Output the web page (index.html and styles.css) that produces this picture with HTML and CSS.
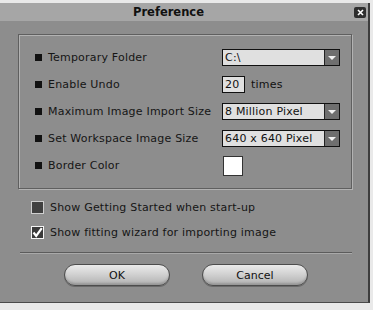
FILE: index.html
```html
<!DOCTYPE html>
<html lang="en">
<head>
    <meta charset="UTF-8">
    <title>Preference</title>
    <link rel="stylesheet" href="styles.css">
</head>
<body>
    <div class="window">
        <div class="titlebar">
            <span class="title">Preference</span>
            <span class="close">
                <svg width="7" height="7" viewBox="0 0 7 7"><path d="M1 1 L6 6 M6 1 L1 6" stroke="#fff" stroke-width="1.6"/></svg>
            </span>
        </div>

        <div class="group">
            <div class="row">
                <span class="bullet"></span><span class="label">Temporary Folder</span>
                <div class="select"><span class="value">C:\</span><span class="arrow"></span></div>
            </div>
            <div class="row">
                <span class="bullet"></span><span class="label">Enable Undo</span>
                <div class="undo"><span class="num">20</span><span class="unit">times</span></div>
            </div>
            <div class="row">
                <span class="bullet"></span><span class="label">Maximum Image Import Size</span>
                <div class="select"><span class="value">8 Million Pixel</span><span class="arrow"></span></div>
            </div>
            <div class="row">
                <span class="bullet"></span><span class="label">Set Workspace Image Size</span>
                <div class="select"><span class="value">640 x 640 Pixel</span><span class="arrow"></span></div>
            </div>
            <div class="row">
                <span class="bullet"></span><span class="label">Border Color</span>
                <div class="swatch"></div>
            </div>
        </div>

        <div class="options">
            <div class="check-row">
                <span class="box"></span>
                <span>Show Getting Started when start-up</span>
            </div>
            <div class="check-row">
                <span class="box checked">
                    <svg width="11" height="11" viewBox="0 0 11 11"><path d="M1.5 5.5 L4.2 9 L9.8 1.2" fill="none" stroke="#fff" stroke-width="2.2"/></svg>
                </span>
                <span>Show fitting wizard for importing image</span>
            </div>
        </div>

        <div class="separator"></div>

        <div class="buttons">
            <button class="btn">OK</button>
            <button class="btn">Cancel</button>
        </div>
    </div>
</body>
</html>
```

FILE: styles.css
```css
* { margin: 0; padding: 0; box-sizing: border-box; }
body {
    font-family: 'DejaVu Sans', Verdana, sans-serif;
    font-size: 11px;
    letter-spacing: 0.2px;
    color: #111;
    background: #e9e9e9;
}
.window {
    margin-top: 3px;
    width: 370px;
    height: 300px;
    background: #8d8d8d;
    border-right: 2px solid #3c3c3c;
    border-bottom: 1px solid #4a4a4a;
}
.titlebar {
    height: 18px;
    background: #a6a6a6;
    display: flex;
    align-items: center;
    position: relative;
}
.title {
    margin-left: 133px;
    font-size: 11.5px;
    font-weight: bold;
    letter-spacing: 0;
    color: #111;
}
.close {
    position: absolute;
    right: 2px;
    top: 4px;
    width: 12px;
    height: 11px;
    background: #2e2e2e;
    border-radius: 2px;
    display: flex;
    align-items: center;
    justify-content: center;
}
.group {
    margin: 13px 16px 0 18px;
    width: 334px;
    padding: 9px 0 9px 16px;
    border: 1px solid #5f5f5f;
    box-shadow: inset 1px 1px 0 #b2b2b2, 1px 1px 0 #b2b2b2;
}
.row {
    height: 27px;
    display: grid;
    grid-template-columns: 6px 167px auto;
    column-gap: 7px;
    align-items: center;
}
.row .label { color: #151515; }
.bullet {
    width: 7px;
    height: 7px;
    background: #111;
}
.select {
    width: 118px;
    height: 17px;
    border: 1px solid #111;
    background: #e0e0e0;
    display: flex;
}
.select .value {
    flex: 1;
    padding-left: 2px;
    line-height: 15px;
}
.arrow {
    width: 15px;
    background: #6f6f6f;
    border-left: 1px solid #222;
    position: relative;
}
.arrow::after {
    content: '';
    position: absolute;
    left: 3px;
    top: 6px;
    border-left: 4px solid transparent;
    border-right: 4px solid transparent;
    border-top: 4px solid #f2f2f2;
}
.undo {
    display: flex;
    align-items: center;
}
.num {
    width: 23px;
    height: 17px;
    border: 1px solid #111;
    background: #e0e0e0;
    padding-left: 2px;
    line-height: 15px;
}
.unit { margin-left: 6px; }
.swatch {
    margin-left: 1px;
    width: 20px;
    height: 20px;
    background: #fff;
    border: 1px solid #333;
}
.options {
    margin-top: 6px;
    padding-left: 31px;
}
.check-row {
    height: 25px;
    display: flex;
    align-items: center;
    gap: 6px;
    color: #151515;
}
.box {
    width: 13px;
    height: 13px;
    background: #404040;
    border: 1px solid #cfcfcf;
    display: flex;
    align-items: center;
    justify-content: center;
}
.box.checked {
    border-color: #f4f4f4;
    background: #3a3a3a;
}
.separator {
    margin: 7px 16px 0 20px;
    height: 2px;
    border-top: 1px solid #5c5c5c;
    border-bottom: 1px solid #a9a9a9;
}
.buttons {
    margin-top: 10px;
    padding-left: 64px;
    display: flex;
    gap: 32px;
}
.btn {
    width: 106px;
    height: 22px;
    border: 1px solid #4c4c4c;
    border-radius: 11px;
    background: linear-gradient(#eaeaea 0%, #d2d2d2 45%, #b0b0b0 100%);
    box-shadow: 0 1px 0 #6a6a6a, inset 0 -2px 2px rgba(0,0,0,0.15);
    font-family: 'DejaVu Sans', Verdana, sans-serif;
    font-size: 11px;
    color: #111;
}
```
